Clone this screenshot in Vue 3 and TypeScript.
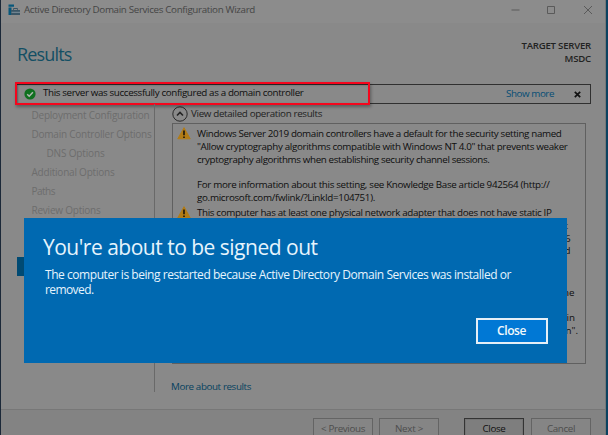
<script setup lang="ts">
import type { Directive } from 'vue'

interface Line { text: string; width: number }
interface Item { lines: Line[] }

// Adjusts tracking so that a single line of text spans the given width.
const vFit: Directive<HTMLElement, number> = {
  mounted(el, binding) {
    const natural = el.getBoundingClientRect().width
    const count = (el.textContent ?? '').length
    if (binding.value && count) el.style.letterSpacing = `${(binding.value - natural) / count}px`
  },
}

const steps = [
  { text: 'Deployment Configuration', width: 118 },
  { text: 'Domain Controller Options', width: 120 },
  { text: 'DNS Options', width: 58, nested: true },
  { text: 'Additional Options', width: 83 },
  { text: 'Paths', width: 23.5 },
  { text: 'Review Options', width: 69 },
]

const items: Item[] = [
  {
    lines: [
      { text: 'Windows Server 2019 domain controllers have a default for the security setting named', width: 364.5 },
      { text: '"Allow cryptography algorithms compatible with Windows NT 4.0" that prevents weaker', width: 370.5 },
      { text: 'cryptography algorithms when establishing security channel sessions.', width: 292.5 },
      { text: '', width: 0 },
      { text: 'For more information about this setting, see Knowledge Base article 942564 (http://', width: 352.5 },
      { text: 'go.microsoft.com/fwlink/?LinkId=104751).', width: 178 },
    ],
  },
  { lines: [{ text: 'This computer has at least one physical network adapter that does not have static IP', width: 354.5 }] },
]

const tails = [
  { text: 'it', end: 'e1' },
  { text: 'IPv6', end: 'e2' },
  { text: 'and', end: 'e2' },
  { text: '', end: 'e1' },
  { text: '', end: 'gap' },
  { text: 'the', end: 'e3' },
  { text: '', end: 'e1' },
  { text: 'in', end: 'e4' },
  { text: 'domain".', end: 'e5' },
]
</script>

<template>
  <div class="desktop">
    <div class="window">
      <header class="titlebar">
        <svg class="appicon" width="13" height="12" viewBox="0 0 13 12">
          <path d="M.5 .5h5.500v2.300H.5zM.5 3.600h3v7.400H.5z" fill="#07577b" />
          <path d="M3 6h9v5H3z" fill="#3b5666" />
          <path d="M5.500 5.800V4.500h4v1.300" fill="none" stroke="#3b5666" />
          <path d="M3.500 8.300h8.500" stroke="#91a0a8" stroke-width=".8" />
        </svg>
        <span v-fit="231" class="apptitle">Active Directory Domain Services Configuration Wizard</span>
        <svg class="controls" width="82" height="10" viewBox="0 0 82 10" fill="none" stroke="#555" stroke-width=".9">
          <path d="M.5 5h8M36.500 1.500h7v7h-7zM73 1l8 8M81 1l-8 8" />
        </svg>
      </header>

      <div class="heading">
        <h1><span v-fit="54.500">Results</span></h1>
        <div class="target">
          <span v-fit="69.500">TARGET SERVER</span>
          <span v-fit="26.500">MSDC</span>
        </div>
      </div>

      <div class="alert">
        <svg class="ok" width="12" height="12" viewBox="0 0 12 12">
          <circle cx="6" cy="6" r="5.600" fill="#10701f" />
          <path d="M3.200 6.200l2 2 3.700-4" fill="none" stroke="#b2b9b2" stroke-width="1.500" />
        </svg>
        <span v-fit="260.500" class="message">This server was successfully configured as a domain controller</span>
        <span v-fit="48" class="more">Show more</span>
        <svg class="dismiss" width="7" height="7" viewBox="0 0 7 7"><path d="M.8.8l5.400 5.400M6.200.8L.8 6.200" stroke="#111" stroke-width="1.700" /></svg>
        <div class="highlight"></div>
      </div>

      <main class="content">
        <nav class="steps">
          <div v-for="step in steps" :key="step.text" class="step" :class="{ nested: step.nested }">
            <span v-fit="step.width">{{ step.text }}</span>
          </div>
          <div class="selected"></div>
        </nav>
        <section class="details">
          <div class="toggle">
            <svg width="16" height="16" viewBox="0 0 16 16" fill="none">
              <circle cx="8" cy="8" r="7.200" stroke="#2b2b2b" />
              <path d="M5 9.500l3-3 3 3" stroke="#222" stroke-width="1.600" />
            </svg>
            <span v-fit="131">View detailed operation results</span>
          </div>
          <div class="panel">
            <div v-for="(item, i) in items" :key="i" class="item">
              <svg class="warn" width="14" height="13" viewBox="0 0 14 13">
                <path d="M7 .7L13.200 11.800H.8z" fill="#b27c16" stroke="#b27c16" stroke-linejoin="round" />
                <path d="M7 3.600v4.600M7 9.400v1.600" stroke="#17130b" stroke-width="1.600" />
              </svg>
              <div>
                <div v-for="(line, j) in item.lines" :key="j" class="line"><span v-fit="line.width">{{ line.text }}</span></div>
              </div>
            </div>
            <div class="tails">
              <div v-for="(tail, i) in tails" :key="i" class="line" :class="tail.end">{{ tail.text }}</div>
            </div>
          </div>
          <div class="about"><span v-fit="80">More about results</span></div>
        </section>
      </main>

      <footer class="footer">
        <button class="btn off"><span v-fit="44">&lt; Previous</span></button>
        <button class="btn off"><span v-fit="28">Next &gt;</span></button>
        <button class="btn primary"><span v-fit="23">Close</span></button>
        <button class="btn off"><span v-fit="28">Cancel</span></button>
      </footer>
    </div>

    <div class="dialog">
      <h2><span v-fit="274.500">You're about to be signed out</span></h2>
      <p>
        <span v-fit="466">The computer is being restarted because Active Directory Domain Services was installed or</span><br />
        <span v-fit="48.500">removed.</span>
      </p>
      <button class="confirm"><span v-fit="29">Close</span></button>
    </div>
  </div>
</template>

<style>
body { margin: 0; overflow: hidden; }
</style>

<style scoped>
* { box-sizing: border-box; }
.desktop { position: relative; width: 608px; height: 435px; overflow: hidden; padding: 0 2px 0 1px; background: linear-gradient(90deg, #1b2838 50%, #0b4260 50%); font: 9.800px/12.750px "Open Sans", "Noto Sans", sans-serif; color: #0e0e0e; }
span { white-space: nowrap; }
.window { height: 435px; display: flex; flex-direction: column; background: #898989; border-right: 1px solid #777; }
.titlebar { height: 23px; display: flex; align-items: center; padding: 0 12px 3px 7px; background: #8c8c8c; flex: none; }
.apptitle { margin-left: 3px; color: #454545; }
.controls { margin-left: auto; }
.heading { height: 61px; flex: none; display: flex; justify-content: space-between; padding: 0 14px 0 16px; }
h1 { margin: 18px 0 0; font-weight: 400; font-size: 18px; line-height: 26px; color: #134f64; }
.target { display: flex; flex-direction: column; align-items: flex-end; padding-top: 17px; line-height: 12.750px; font-weight: 600; font-size: 9.600px; color: #222; }
.alert { position: relative; height: 20px; flex: none; margin: 0 14px 0 15px; border: 1px solid #303030; display: flex; align-items: center; padding: 0 9px 0 7px; }
.message { margin-left: 7px; position: relative; top: -1px; }
.more { margin-left: auto; margin-right: 20px; color: #064d75; }
.highlight { position: absolute; left: -2px; top: -3px; width: 355px; height: 23px; border: 2px solid #f5061d; box-shadow: 1px 2px 3px #0005, inset 1px 1px 2px #0005; }
.content { flex: none; height: 305px; display: flex; padding-right: 20px; }
.steps { width: 154px; height: 288px; border-right: 1px solid #696969; padding: 1.500px 0 0 30.500px; position: relative; flex: none; font-size: 10px; color: #6d6d6d; }
.step { height: 19.100px; line-height: 19.100px; }
.nested { padding-left: 15px; }
.selected { position: absolute; left: 16px; top: 153px; width: 20px; height: 19px; background: #004a73; }
.details { flex: 1; padding-left: 17px; min-width: 0; }
.toggle { height: 19px; display: flex; align-items: center; gap: 3px; padding-top: 1px; color: #1e1e1e; }
.panel { height: 241px; width: 414px; border: 1px solid #606060; padding-top: 4px; }
.item { display: flex; gap: 6px; padding-left: 4px; margin-bottom: 2.500px; }
.warn { flex: none; margin-top: -1px; }
.line { height: 12.750px; line-height: 12.750px; }
.tails { text-align: right; margin-top: -2.500px; }
.e1 { padding-right: 17px; }
.e2 { padding-right: 14.500px; }
.e3 { padding-right: 10.500px; }
.e4 { padding-right: 10px; }
.e5 { padding-right: 7px; }
.gap { height: 16px; }
.about { margin: 17px 0 0 -1px; color: #064260; }
.footer { height: 26px; flex: none; border-top: 1px solid #777; background: #838383; display: flex; padding: 8px 0 0 312px; }
.btn { width: 60px; height: 20px; flex: none; padding: 0; border: 1px solid #646464; background: #858585; font: inherit; line-height: 17px; color: #4d4d4d; margin-right: 6px; }
.primary { margin-left: 19px; margin-right: 7px; border-color: #343434; color: #111; background: #7e7e7e; box-shadow: inset 0 0 0 1px #747474; }
.dialog { position: absolute; left: 24px; top: 217.500px; width: 542.500px; height: 145px; background: #0069b1; color: #e6f4fd; padding: 15px 19px 0; }
h2 { margin: 0; font-weight: 400; font-size: 21px; line-height: 29px; }
p { margin: 5px 0 0 2px; font-size: 12px; line-height: 15.800px; }
.confirm { display: block; margin: 20px 0 0 auto; width: 72px; height: 26px; padding: 0; border: 2px solid #e5eff7; background: #0078d5; color: #f2f8fc; font: 600 12px/20px "Open Sans", sans-serif; }
</style>
